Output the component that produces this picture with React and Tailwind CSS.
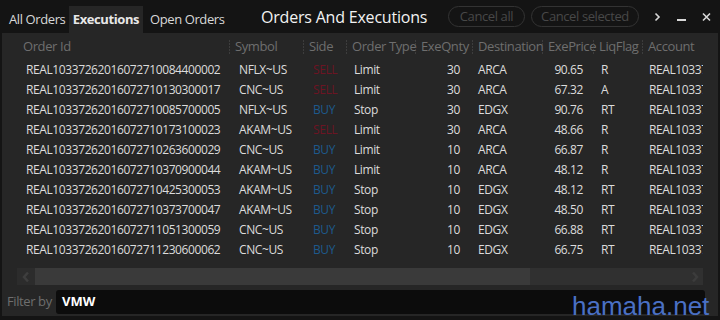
import React from 'react';

const rows = [
  ['REAL10337262016072710084400002', 'NFLX~US', 'SELL', 'Limit', '30', 'ARCA', '90.65', 'R'],
  ['REAL10337262016072710130300017', 'CNC~US', 'SELL', 'Limit', '30', 'ARCA', '67.32', 'A'],
  ['REAL10337262016072710085700005', 'NFLX~US', 'BUY', 'Stop', '30', 'EDGX', '90.76', 'RT'],
  ['REAL10337262016072710173100023', 'AKAM~US', 'SELL', 'Limit', '30', 'ARCA', '48.66', 'R'],
  ['REAL10337262016072710263600029', 'CNC~US', 'BUY', 'Limit', '10', 'ARCA', '66.87', 'R'],
  ['REAL10337262016072710370900044', 'AKAM~US', 'BUY', 'Limit', '10', 'ARCA', '48.12', 'R'],
  ['REAL10337262016072710425300053', 'AKAM~US', 'BUY', 'Stop', '10', 'EDGX', '48.12', 'RT'],
  ['REAL10337262016072710373700047', 'AKAM~US', 'BUY', 'Stop', '10', 'EDGX', '48.50', 'RT'],
  ['REAL10337262016072711051300059', 'CNC~US', 'BUY', 'Stop', '10', 'EDGX', '66.88', 'RT'],
  ['REAL10337262016072711230600062', 'CNC~US', 'BUY', 'Stop', '10', 'EDGX', '66.75', 'RT'],
];

const cols = [
  { name: 'Order Id', w: 'w-[212px]' },
  { name: 'Symbol', w: 'w-[74px]' },
  { name: 'Side', w: 'w-[43px]' },
  { name: 'Order Type', w: 'w-[69px]' },
  { name: 'ExeQnty', w: 'w-[57px]' },
  { name: 'Destination', w: 'w-[70px]' },
  { name: 'ExePrice', w: 'w-[51px]' },
  { name: 'LiqFlag', w: 'w-[49px]' },
  { name: 'Account', w: 'w-[61px]' },
];

const Sep = () => (
  <div className="absolute left-0 top-1/2 -translate-y-1/2 flex flex-col gap-[2px]">
    <span className="w-px h-px bg-[#555]" />
    <span className="w-px h-px bg-[#555]" />
    <span className="w-px h-px bg-[#555]" />
    <span className="w-px h-px bg-[#555]" />
    <span className="w-px h-px bg-[#555]" />
  </div>
);

const App = () => {
  return (
    <div className="relative w-[720px] h-[320px] bg-[#141414] overflow-hidden text-[#dcdcdc]" style={{ fontFamily: '"Open Sans", "Noto Sans", sans-serif' }}>
      {/* Top bar */}
      <div className="relative flex items-end h-[33px] whitespace-nowrap tracking-[-0.4px]">
        <div className="flex items-end h-[27px] text-[13px] w-[225px] shrink-0">
          <div className="w-[69px] h-full flex items-center pl-[9px] text-[#d8d8d8]">All Orders</div>
          <div className="w-[74px] h-full flex items-center justify-center bg-[#262626] font-bold text-[#e8e8e8]">Executions</div>
          <div className="h-full flex items-center pl-[7px] text-[#d8d8d8]">Open Orders</div>
        </div>
        <div className="flex-1 self-stretch flex items-center">
          <div className="w-[36px] shrink-0" />
          <div className="w-[187px] shrink-0 text-[16px] text-[#f2f2f2] tracking-[-0.2px]">Orders And Executions</div>
          <div className="w-[191px] shrink-0 flex gap-[6px]">
            <div className="h-[21px] w-[77px] shrink-0 rounded-full border-[1.5px] border-[#333] text-[13px] text-[#484848] flex items-center justify-center">Cancel all</div>
            <div className="h-[21px] w-[108px] shrink-0 rounded-full border-[1.5px] border-[#333] text-[13px] text-[#484848] flex items-center justify-center">Cancel selected</div>
          </div>
        </div>
        {/* Window controls */}
        <div className="absolute right-[9px] top-0 h-[33px] w-[57px] flex items-center justify-between">
          <span className="block w-[7px] h-[10px] bg-transparent">
            <svg width="7" height="10" viewBox="0 0 7 10"><path d="M1.5 1.5 L5 5 L1.5 8.5" stroke="#d8d8d8" strokeWidth="1.6" fill="none" /></svg>
          </span>
          <span className="block w-[9px] h-[10px] pt-[7px]">
            <span className="block w-[9px] h-[2px] bg-[#d8d8d8]" />
          </span>
          <span className="block w-[9px] h-[10px]">
            <svg width="9" height="10" viewBox="0 0 9 10"><path d="M1 1.5 L8 8.5 M8 1.5 L1 8.5" stroke="#d8d8d8" strokeWidth="1.6" /></svg>
          </span>
        </div>
      </div>

      {/* Panel */}
      <div className="mx-[2px] h-[283px] bg-[#262626] flex flex-col tracking-[-0.4px]">
        <div className="pl-[15px] pr-[15px]">
          <div className="overflow-hidden w-[686px]">
            <div className="flex h-[27px] items-center text-[13px] text-[#6e6e6e] whitespace-nowrap">
              {cols.map((c, i) => (
                <div key={c.name} className={`${c.w} shrink-0 relative pl-[6px] h-full flex items-center`}>
                  {i > 0 && <Sep />}
                  {c.name}
                </div>
              ))}
            </div>
            {rows.map((r, ri) => (
              <div key={ri} className="flex h-[20px] items-center text-[12px] whitespace-nowrap">
                <div className="w-[212px] shrink-0 pl-[9px]">{r[0]}</div>
                <div className="w-[74px] shrink-0 pl-[10px]">{r[1]}</div>
                <div className={`w-[43px] shrink-0 pl-[10px] ${r[2] === 'SELL' ? 'text-[#6c1423]' : 'text-[#1d5a8c]'}`}>{r[2]}</div>
                <div className="w-[69px] shrink-0 pl-[8px]">{r[3]}</div>
                <div className="w-[57px] shrink-0 pr-[12px] text-right">{r[4]}</div>
                <div className="w-[70px] shrink-0 pl-[6px]">{r[5]}</div>
                <div className="w-[51px] shrink-0 pr-[10px] text-right">{r[6]}</div>
                <div className="w-[49px] shrink-0 pl-[8px]">{r[7]}</div>
                <div className="w-[61px] shrink-0 pl-[7px] overflow-hidden">REAL10337262016</div>
              </div>
            ))}
          </div>
          {/* Horizontal scrollbar */}
          <div className="mt-[8px] h-[17px] w-[686px] flex bg-[#303030]">
            <div className="w-[18px] h-full bg-[#2c2c2c] flex items-center justify-center">
              <svg width="8" height="12" viewBox="0 0 8 12"><path d="M6 1.5 L2 6 L6 10.5" stroke="#3e3e3e" strokeWidth="2.5" fill="none" /></svg>
            </div>
            <div className="w-[495px] h-full bg-[#3a3a3a]" />
            <div className="flex-1 h-full flex items-center justify-end pr-[4px]">
              <svg width="8" height="12" viewBox="0 0 8 12"><path d="M2 1.5 L6 6 L2 10.5" stroke="#3c3c3c" strokeWidth="2.5" fill="none" /></svg>
            </div>
          </div>
        </div>
        {/* Filter */}
        <div className="mt-[5px] flex items-center pl-[5px]">
          <span className="text-[13px] text-[#6e6e6e] w-[49px]">Filter by</span>
          <div className="w-[649px] h-[24px] rounded-[3px] bg-[#0c0c0c] flex items-center pl-[6px] text-[13px] font-bold text-white tracking-normal">VMW</div>
        </div>
      </div>

      {/* Watermark */}
      <div className="absolute left-[572px] top-[293px] text-[26px] leading-none text-[#4a70c4]" style={{ fontFamily: '"Liberation Sans", sans-serif' }}>hamaha.net</div>
    </div>
  );
};

export default App;
